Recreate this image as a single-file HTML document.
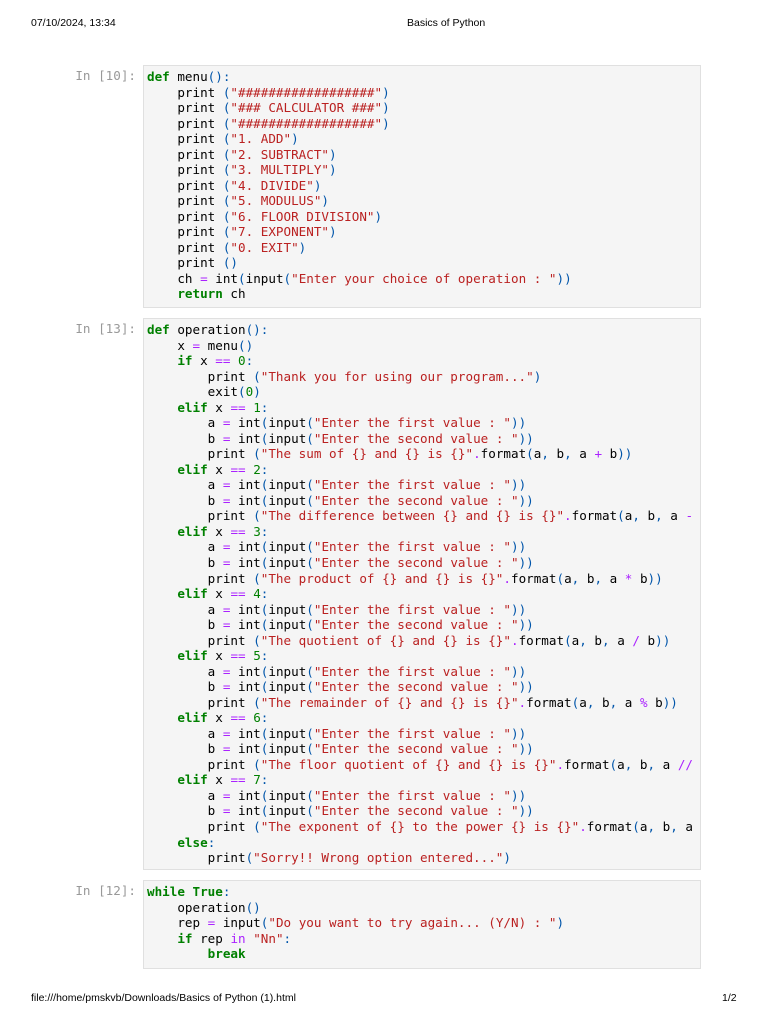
<!DOCTYPE html>
<html><head><meta charset="utf-8"><style>
body{margin:0;width:768px;height:1024px;background:#fff;position:relative;overflow:hidden;font-family:"Liberation Sans",sans-serif}
.hd{position:absolute;font-size:10.5px;color:#000;top:17px}
.cell{position:absolute;left:143px;width:558px;background:#f5f5f5;border:1px solid #e0e0e0;box-sizing:border-box;padding:3px 7px 3px 3px}
.clip{overflow:hidden}
pre{margin:0;font-family:"DejaVu Sans Mono",monospace;font-size:12.6px;line-height:15.53px;color:#000;white-space:pre}
.p{position:absolute;right:632px;font-family:"DejaVu Sans Mono",monospace;font-size:12.6px;color:#999;line-height:15.53px}
.k{color:#008000;font-weight:bold}.s{color:#ba2121}.b{color:#0055aa}.o{color:#aa22ff}.n{color:#008000}
</style></head><body>
<div class="hd" style="left:31px">07/10/2024, 13:34</div>
<div class="hd" style="left:407px">Basics of Python</div>
<div class="hd" style="left:31px;top:992px">file:///home/pmskvb/Downloads/Basics of Python (1).html</div>
<div class="hd" style="left:722px;top:992px">1/2</div>

<div class="p" style="top:68px">In [10]:</div>
<div class="cell" style="top:65px;height:243px"><div class="clip"><pre><span class="k">def</span> menu<span class="b">():</span>
    print <span class="b">(</span><span class="s">"##################"</span><span class="b">)</span>
    print <span class="b">(</span><span class="s">"### CALCULATOR ###"</span><span class="b">)</span>
    print <span class="b">(</span><span class="s">"##################"</span><span class="b">)</span>
    print <span class="b">(</span><span class="s">"1. ADD"</span><span class="b">)</span>
    print <span class="b">(</span><span class="s">"2. SUBTRACT"</span><span class="b">)</span>
    print <span class="b">(</span><span class="s">"3. MULTIPLY"</span><span class="b">)</span>
    print <span class="b">(</span><span class="s">"4. DIVIDE"</span><span class="b">)</span>
    print <span class="b">(</span><span class="s">"5. MODULUS"</span><span class="b">)</span>
    print <span class="b">(</span><span class="s">"6. FLOOR DIVISION"</span><span class="b">)</span>
    print <span class="b">(</span><span class="s">"7. EXPONENT"</span><span class="b">)</span>
    print <span class="b">(</span><span class="s">"0. EXIT"</span><span class="b">)</span>
    print <span class="b">()</span>
    ch <span class="o">=</span> int<span class="b">(</span>input<span class="b">(</span><span class="s">"Enter your choice of operation : "</span><span class="b">))</span>
    <span class="k">return</span> ch</pre></div></div>

<div class="p" style="top:321px">In [13]:</div>
<div class="cell" style="top:318px;height:552px"><div class="clip"><pre><span class="k">def</span> operation<span class="b">():</span>
    x <span class="o">=</span> menu<span class="b">()</span>
    <span class="k">if</span> x <span class="o">==</span> <span class="n">0</span><span class="b">:</span>
        print <span class="b">(</span><span class="s">"Thank you for using our program..."</span><span class="b">)</span>
        exit<span class="b">(</span><span class="n">0</span><span class="b">)</span>
    <span class="k">elif</span> x <span class="o">==</span> <span class="n">1</span><span class="b">:</span>
        a <span class="o">=</span> int<span class="b">(</span>input<span class="b">(</span><span class="s">"Enter the first value : "</span><span class="b">))</span>
        b <span class="o">=</span> int<span class="b">(</span>input<span class="b">(</span><span class="s">"Enter the second value : "</span><span class="b">))</span>
        print <span class="b">(</span><span class="s">"The sum of {} and {} is {}"</span><span class="o">.</span>format<span class="b">(</span>a<span class="b">,</span> b<span class="b">,</span> a <span class="o">+</span> b<span class="b">))</span>
    <span class="k">elif</span> x <span class="o">==</span> <span class="n">2</span><span class="b">:</span>
        a <span class="o">=</span> int<span class="b">(</span>input<span class="b">(</span><span class="s">"Enter the first value : "</span><span class="b">))</span>
        b <span class="o">=</span> int<span class="b">(</span>input<span class="b">(</span><span class="s">"Enter the second value : "</span><span class="b">))</span>
        print <span class="b">(</span><span class="s">"The difference between {} and {} is {}"</span><span class="o">.</span>format<span class="b">(</span>a<span class="b">,</span> b<span class="b">,</span> a <span class="o">-</span> b<span class="b">))</span>
    <span class="k">elif</span> x <span class="o">==</span> <span class="n">3</span><span class="b">:</span>
        a <span class="o">=</span> int<span class="b">(</span>input<span class="b">(</span><span class="s">"Enter the first value : "</span><span class="b">))</span>
        b <span class="o">=</span> int<span class="b">(</span>input<span class="b">(</span><span class="s">"Enter the second value : "</span><span class="b">))</span>
        print <span class="b">(</span><span class="s">"The product of {} and {} is {}"</span><span class="o">.</span>format<span class="b">(</span>a<span class="b">,</span> b<span class="b">,</span> a <span class="o">*</span> b<span class="b">))</span>
    <span class="k">elif</span> x <span class="o">==</span> <span class="n">4</span><span class="b">:</span>
        a <span class="o">=</span> int<span class="b">(</span>input<span class="b">(</span><span class="s">"Enter the first value : "</span><span class="b">))</span>
        b <span class="o">=</span> int<span class="b">(</span>input<span class="b">(</span><span class="s">"Enter the second value : "</span><span class="b">))</span>
        print <span class="b">(</span><span class="s">"The quotient of {} and {} is {}"</span><span class="o">.</span>format<span class="b">(</span>a<span class="b">,</span> b<span class="b">,</span> a <span class="o">/</span> b<span class="b">))</span>
    <span class="k">elif</span> x <span class="o">==</span> <span class="n">5</span><span class="b">:</span>
        a <span class="o">=</span> int<span class="b">(</span>input<span class="b">(</span><span class="s">"Enter the first value : "</span><span class="b">))</span>
        b <span class="o">=</span> int<span class="b">(</span>input<span class="b">(</span><span class="s">"Enter the second value : "</span><span class="b">))</span>
        print <span class="b">(</span><span class="s">"The remainder of {} and {} is {}"</span><span class="o">.</span>format<span class="b">(</span>a<span class="b">,</span> b<span class="b">,</span> a <span class="o">%</span> b<span class="b">))</span>
    <span class="k">elif</span> x <span class="o">==</span> <span class="n">6</span><span class="b">:</span>
        a <span class="o">=</span> int<span class="b">(</span>input<span class="b">(</span><span class="s">"Enter the first value : "</span><span class="b">))</span>
        b <span class="o">=</span> int<span class="b">(</span>input<span class="b">(</span><span class="s">"Enter the second value : "</span><span class="b">))</span>
        print <span class="b">(</span><span class="s">"The floor quotient of {} and {} is {}"</span><span class="o">.</span>format<span class="b">(</span>a<span class="b">,</span> b<span class="b">,</span> a <span class="o">//</span> b<span class="b">))</span>
    <span class="k">elif</span> x <span class="o">==</span> <span class="n">7</span><span class="b">:</span>
        a <span class="o">=</span> int<span class="b">(</span>input<span class="b">(</span><span class="s">"Enter the first value : "</span><span class="b">))</span>
        b <span class="o">=</span> int<span class="b">(</span>input<span class="b">(</span><span class="s">"Enter the second value : "</span><span class="b">))</span>
        print <span class="b">(</span><span class="s">"The exponent of {} to the power {} is {}"</span><span class="o">.</span>format<span class="b">(</span>a<span class="b">,</span> b<span class="b">,</span> a <span class="o">**</span> b<span class="b">))</span>
    <span class="k">else</span><span class="b">:</span>
        print<span class="b">(</span><span class="s">"Sorry!! Wrong option entered..."</span><span class="b">)</span></pre></div></div>

<div class="p" style="top:883px">In [12]:</div>
<div class="cell" style="top:880px;height:89px"><div class="clip"><pre><span class="k">while</span> <span class="k">True</span><span class="b">:</span>
    operation<span class="b">()</span>
    rep <span class="o">=</span> input<span class="b">(</span><span class="s">"Do you want to try again... (Y/N) : "</span><span class="b">)</span>
    <span class="k">if</span> rep <span class="o">in</span> <span class="s">"Nn"</span><span class="b">:</span>
        <span class="k">break</span></pre></div></div>
</body></html>
